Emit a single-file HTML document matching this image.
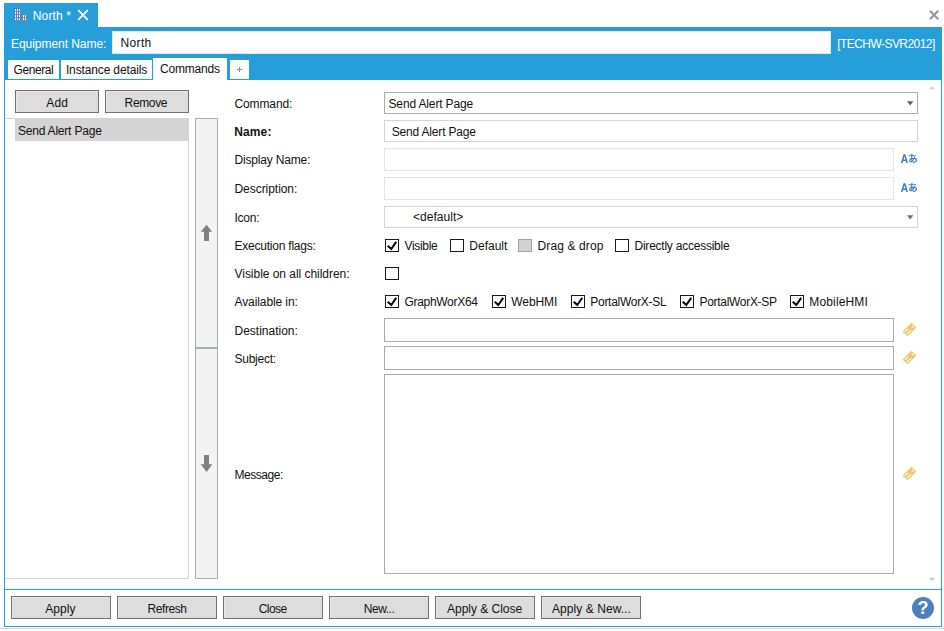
<!DOCTYPE html>
<html>
<head>
<meta charset="utf-8">
<title>North - Equipment</title>
<style>
html,body{margin:0;padding:0;}
body{width:944px;height:631px;background:#fff;position:relative;overflow:hidden;
 font-family:"Liberation Sans",sans-serif;font-size:12px;color:#111;}
.a{position:absolute;box-sizing:border-box;}
.t{position:absolute;white-space:nowrap;line-height:16px;height:16px;}
.blue{background:#259eda;}
.btn{background:#dddddd;border:1px solid #707070;box-shadow:inset 1px 1px 0 #e9e9e9;}
.tab{background:#fff;}
.cb{width:14px;height:13px;border:1px solid #1a1a1a;background:#fff;}
.cb.dis{border-color:#a3a3a3;background:#d2d2d2;}
.tb{background:#fff;border:1px solid #aba8a8;}
svg{position:absolute;overflow:visible;}
</style>
</head>
<body>
<!-- document tab -->
<div class="a blue" style="left:4px;top:3px;width:94px;height:24px;"></div>
<!-- blue header band -->
<div class="a blue" style="left:4px;top:27px;width:938px;height:53px;"></div>
<!-- window frame -->
<div class="a" style="left:4px;top:80px;width:938px;height:547px;border:1px solid #259eda;border-top:none;"></div>
<!-- separator above button bar -->
<div class="a blue" style="left:5px;top:589px;width:936px;height:1px;"></div>
<!-- bottom gray line -->
<div class="a" style="left:0;top:628px;width:944px;height:1px;background:#d9d6d6;"></div>

<!-- building icon -->
<svg style="left:14px;top:8px;" width="14" height="14" viewBox="0 0 14 14">
 <rect x="0.2" y="0.2" width="6.6" height="13.4" fill="#5b7fbd"/>
 <g fill="#fff">
  <rect x="1" y="1.2" width="1" height="2"/><rect x="3" y="1.2" width="1" height="2"/><rect x="5" y="1.2" width="1" height="2"/>
  <rect x="1" y="4.2" width="1" height="2"/><rect x="3" y="4.2" width="1" height="2"/><rect x="5" y="4.2" width="1" height="2"/>
  <rect x="1" y="7.2" width="1" height="2"/><rect x="3" y="7.2" width="1" height="2"/><rect x="5" y="7.2" width="1" height="2"/>
  <rect x="1" y="10.2" width="1" height="2"/><rect x="3" y="10.2" width="1" height="2"/><rect x="5" y="10.2" width="1" height="2"/>
 </g>
 <rect x="8.2" y="6.2" width="4.6" height="7.4" fill="#848484"/>
 <g fill="#fff">
  <rect x="9" y="7.2" width="1" height="2"/><rect x="11" y="7.2" width="1" height="2"/>
  <rect x="9" y="10.2" width="1" height="2"/><rect x="11" y="10.2" width="1" height="2"/>
 </g>
</svg>
<!-- tab close X -->
<svg style="left:77px;top:9px;" width="12" height="12" viewBox="0 0 12 12">
 <path d="M1.2 1.2 L10.8 10.8 M10.8 1.2 L1.2 10.8" stroke="#fff" stroke-width="1.7" fill="none"/>
</svg>
<!-- window close X -->
<svg style="left:928px;top:10px;" width="11" height="11" viewBox="0 0 11 11">
 <path d="M1.9 0.8 L10.3 9.2 M10.3 0.8 L1.9 9.2" stroke="#979797" stroke-width="2.1" fill="none"/>
</svg>

<!-- equipment name input -->
<div class="a" style="left:112px;top:31px;width:719px;height:23px;background:#fff;border:1px solid #e6e6e6;"></div>

<!-- sub tabs -->
<div class="a tab" style="left:8px;top:60px;width:51px;height:19px;"></div>
<div class="a tab" style="left:61px;top:60px;width:91px;height:19px;"></div>
<div class="a tab" style="left:153px;top:58px;width:74px;height:22px;"></div>
<div class="a tab" style="left:230px;top:60px;width:19px;height:19px;"></div>
<svg style="left:236px;top:66px;" width="7" height="7" viewBox="0 0 7 7">
 <path d="M3.5 0.9 V6.1 M0.9 3.5 H6.1" stroke="#7a9a8c" stroke-width="1" fill="none"/>
</svg>

<!-- left pane -->
<div class="a btn" style="left:15px;top:90px;width:84px;height:23px;"></div>
<div class="a btn" style="left:105px;top:90px;width:84px;height:23px;"></div>
<div class="a" style="left:5px;top:118px;width:184px;height:461px;border:1px solid #d6d4d4;border-left:none;"></div>
<div class="a" style="left:15px;top:118px;width:174px;height:23px;background:#d5d3d4;"></div>
<!-- up / down column -->
<div class="a" style="left:195px;top:118px;width:23px;height:230px;background:#f3f3f3;border:1px solid #a7afb5;"></div>
<div class="a" style="left:195px;top:348px;width:23px;height:231px;background:#f3f3f3;border:1px solid #a7afb5;"></div>
<svg style="left:200px;top:224px;" width="14" height="18" viewBox="0 0 14 18">
 <path d="M6.5 0.7 L12.2 7.8 H9 V17 H4 V7.8 H0.8 Z" fill="#808080"/>
</svg>
<svg style="left:200px;top:455px;" width="14" height="18" viewBox="0 0 14 18">
 <path d="M4 0 H9 V9.3 H12.4 L6.6 16.9 L0.7 9.3 H4 Z" fill="#808080"/>
</svg>

<!-- form fields -->
<div class="a" style="left:384px;top:92px;width:534px;height:22px;background:#fff;border:1px solid #acacac;"></div>
<svg style="left:907px;top:101px;" width="7" height="5" viewBox="0 0 7 5"><path d="M0 0.3 H6.4 L3.2 4.4 Z" fill="#606060"/></svg>
<div class="a" style="left:384px;top:120px;width:534px;height:22px;background:#fff;border:1px solid #d4d4d4;"></div>
<div class="a" style="left:384px;top:148px;width:510px;height:23px;background:#fff;border:1px solid #e3e3ec;"></div>
<div class="a" style="left:384px;top:177px;width:510px;height:23px;background:#fff;border:1px solid #e3e3ec;"></div>
<div class="a" style="left:384px;top:206px;width:534px;height:22px;background:#fff;border:1px solid #d4d4d4;"></div>
<svg style="left:907px;top:215px;" width="7" height="5" viewBox="0 0 7 5"><path d="M0 0.3 H6.4 L3.2 4.4 Z" fill="#707070"/></svg>

<!-- A-a language icons -->
<svg style="left:900px;top:153px;" width="18" height="11" viewBox="0 0 18 11">
 <path fill="#4380bf" fill-rule="evenodd" d="M0.9 9.9 L3.5 1.2 H5.4 L8 9.9 H6.3 L5.75 7.9 H3.15 L2.6 9.9 Z M3.55 6.6 H5.35 L4.45 3.2 Z"/>
 <g stroke="#4380bf" stroke-width="1.15" fill="none" stroke-linecap="round">
  <path d="M9.2 2.7 H15.8"/>
  <path d="M11.9 1.1 C11.6 3.8 11.5 6.2 12 8.8"/>
  <path d="M14.4 4.3 C13.6 6.9 11.9 8.9 10.3 8.7 C9.1 8.3 9.5 6.3 11.5 5.6 C13.9 4.8 16.5 5.3 16.6 7.1 C16.6 8.5 15.1 9.2 13.5 9.4"/>
 </g>
</svg>
<svg style="left:900px;top:182px;" width="18" height="11" viewBox="0 0 18 11">
 <path fill="#4380bf" fill-rule="evenodd" d="M0.9 9.9 L3.5 1.2 H5.4 L8 9.9 H6.3 L5.75 7.9 H3.15 L2.6 9.9 Z M3.55 6.6 H5.35 L4.45 3.2 Z"/>
 <g stroke="#4380bf" stroke-width="1.15" fill="none" stroke-linecap="round">
  <path d="M9.2 2.7 H15.8"/>
  <path d="M11.9 1.1 C11.6 3.8 11.5 6.2 12 8.8"/>
  <path d="M14.4 4.3 C13.6 6.9 11.9 8.9 10.3 8.7 C9.1 8.3 9.5 6.3 11.5 5.6 C13.9 4.8 16.5 5.3 16.6 7.1 C16.6 8.5 15.1 9.2 13.5 9.4"/>
 </g>
</svg>

<!-- checkboxes row 1 -->
<div class="a cb" style="left:385px;top:239px;"></div>
<div class="a cb" style="left:450px;top:239px;"></div>
<div class="a cb dis" style="left:518px;top:239px;"></div>
<div class="a cb" style="left:615px;top:239px;"></div>
<!-- row 2 -->
<div class="a cb" style="left:385px;top:267px;"></div>
<!-- row 3 -->
<div class="a cb" style="left:385px;top:295px;"></div>
<div class="a cb" style="left:492px;top:295px;"></div>
<div class="a cb" style="left:571px;top:295px;"></div>
<div class="a cb" style="left:680px;top:295px;"></div>
<div class="a cb" style="left:790px;top:295px;"></div>
<!-- check marks -->
<svg style="left:385px;top:239px;" width="14" height="13" viewBox="0 0 14 13"><path d="M2.7 6.7 L6.3 10 L11.2 2.9" stroke="#000" stroke-width="2" fill="none"/></svg>
<svg style="left:385px;top:295px;" width="14" height="13" viewBox="0 0 14 13"><path d="M2.7 6.7 L6.3 10 L11.2 2.9" stroke="#000" stroke-width="2" fill="none"/></svg>
<svg style="left:492px;top:295px;" width="14" height="13" viewBox="0 0 14 13"><path d="M2.7 6.7 L6.3 10 L11.2 2.9" stroke="#000" stroke-width="2" fill="none"/></svg>
<svg style="left:571px;top:295px;" width="14" height="13" viewBox="0 0 14 13"><path d="M2.7 6.7 L6.3 10 L11.2 2.9" stroke="#000" stroke-width="2" fill="none"/></svg>
<svg style="left:680px;top:295px;" width="14" height="13" viewBox="0 0 14 13"><path d="M2.7 6.7 L6.3 10 L11.2 2.9" stroke="#000" stroke-width="2" fill="none"/></svg>
<svg style="left:790px;top:295px;" width="14" height="13" viewBox="0 0 14 13"><path d="M2.7 6.7 L6.3 10 L11.2 2.9" stroke="#000" stroke-width="2" fill="none"/></svg>

<!-- destination / subject / message -->
<div class="a tb" style="left:384px;top:318px;width:510px;height:24px;"></div>
<div class="a tb" style="left:384px;top:346px;width:510px;height:24px;"></div>
<div class="a tb" style="left:384px;top:374px;width:510px;height:200px;"></div>

<!-- tag icons -->
<svg style="left:902px;top:322px;" width="15" height="15" viewBox="0 0 15 15">
 <g transform="rotate(-45 7.5 7.5)">
  <rect x="1.3" y="4" width="12.4" height="7" rx="0.7" fill="#efc568"/>
  <path d="M11.9 6.1 L12.4 7.1 L13.4 7.6 L12.4 8.1 L11.9 9.1 L11.4 8.1 L10.4 7.6 L11.4 7.1 Z" fill="#fff"/>
  <rect x="2.6" y="5.4" width="4.4" height="1.15" fill="#fff"/>
  <rect x="2.5" y="8.4" width="5.8" height="1.15" fill="#fff"/>
 </g>
</svg>
<svg style="left:902px;top:350px;" width="15" height="15" viewBox="0 0 15 15">
 <g transform="rotate(-45 7.5 7.5)">
  <rect x="1.3" y="4" width="12.4" height="7" rx="0.7" fill="#efc568"/>
  <path d="M11.9 6.1 L12.4 7.1 L13.4 7.6 L12.4 8.1 L11.9 9.1 L11.4 8.1 L10.4 7.6 L11.4 7.1 Z" fill="#fff"/>
  <rect x="2.6" y="5.4" width="4.4" height="1.15" fill="#fff"/>
  <rect x="2.5" y="8.4" width="5.8" height="1.15" fill="#fff"/>
 </g>
</svg>
<svg style="left:902px;top:466px;" width="15" height="15" viewBox="0 0 15 15">
 <g transform="rotate(-45 7.5 7.5)">
  <rect x="1.3" y="4" width="12.4" height="7" rx="0.7" fill="#efc568"/>
  <path d="M11.9 6.1 L12.4 7.1 L13.4 7.6 L12.4 8.1 L11.9 9.1 L11.4 8.1 L10.4 7.6 L11.4 7.1 Z" fill="#fff"/>
  <rect x="2.6" y="5.4" width="4.4" height="1.15" fill="#fff"/>
  <rect x="2.5" y="8.4" width="5.8" height="1.15" fill="#fff"/>
 </g>
</svg>

<!-- scroll arrows -->
<svg style="left:929px;top:86px;" width="7" height="4" viewBox="0 0 7 4"><path d="M0 3.2 L3 0 L6 3.2 Z" fill="#d4d4d4"/></svg>
<svg style="left:929px;top:577px;" width="7" height="5" viewBox="0 0 7 5"><path d="M0 0.7 H6 L3 4 Z" fill="#c8c8c8"/></svg>

<!-- bottom buttons -->
<div class="a btn" style="left:11px;top:596px;width:100px;height:23px;"></div>
<div class="a btn" style="left:117px;top:596px;width:100px;height:23px;"></div>
<div class="a btn" style="left:223px;top:596px;width:100px;height:23px;"></div>
<div class="a btn" style="left:329px;top:596px;width:100px;height:23px;"></div>
<div class="a btn" style="left:435px;top:596px;width:100px;height:23px;"></div>
<div class="a btn" style="left:541px;top:596px;width:100px;height:23px;"></div>

<!-- help icon -->
<div class="a" style="left:912px;top:597px;width:22px;height:22px;border-radius:11px;background:#4b81bc;"></div>
<span class="t" style="left:917.4px;top:598.3px;font-size:18px;font-weight:700;color:#fff;line-height:21px;height:21px;">?</span>

<span class="t" style="left:32.80px;top:7.70px;letter-spacing:0.137px;color:#fff;">North *</span>
<span class="t" style="left:11.00px;top:35.75px;letter-spacing:-0.051px;color:#fff;">Equipment Name:</span>
<span class="t" style="left:120.60px;top:34.60px;letter-spacing:0.333px;">North</span>
<span class="t" style="left:837.20px;top:36.00px;letter-spacing:-0.548px;color:#fff;">[TECHW-SVR2012]</span>
<span class="t" style="left:13.50px;top:61.50px;letter-spacing:-0.421px;">General</span>
<span class="t" style="left:65.90px;top:61.50px;letter-spacing:-0.136px;">Instance details</span>
<span class="t" style="left:160.00px;top:60.50px;letter-spacing:-0.193px;">Commands</span>
<span class="t" style="left:46.30px;top:94.75px;letter-spacing:0.111px;">Add</span>
<span class="t" style="left:124.60px;top:94.75px;letter-spacing:-0.362px;">Remove</span>
<span class="t" style="left:17.90px;top:122.60px;letter-spacing:-0.201px;">Send Alert Page</span>
<span class="t" style="left:234.50px;top:96.00px;letter-spacing:-0.122px;">Command:</span>
<span class="t" style="left:234.30px;top:123.75px;letter-spacing:0.104px;font-weight:700;">Name:</span>
<span class="t" style="left:234.50px;top:151.75px;letter-spacing:-0.182px;">Display Name:</span>
<span class="t" style="left:234.50px;top:180.50px;letter-spacing:-0.048px;">Description:</span>
<span class="t" style="left:234.40px;top:210.00px;letter-spacing:-0.220px;">Icon:</span>
<span class="t" style="left:234.50px;top:238.00px;letter-spacing:-0.225px;">Execution flags:</span>
<span class="t" style="left:234.50px;top:266.00px;letter-spacing:-0.033px;">Visible on all children:</span>
<span class="t" style="left:234.50px;top:294.00px;letter-spacing:-0.096px;">Available in:</span>
<span class="t" style="left:234.50px;top:322.50px;letter-spacing:-0.003px;">Destination:</span>
<span class="t" style="left:234.50px;top:350.50px;letter-spacing:-0.254px;">Subject:</span>
<span class="t" style="left:234.40px;top:466.50px;letter-spacing:-0.427px;">Message:</span>
<span class="t" style="left:388.50px;top:95.80px;letter-spacing:-0.144px;">Send Alert Page</span>
<span class="t" style="left:391.70px;top:123.70px;letter-spacing:-0.173px;">Send Alert Page</span>
<span class="t" style="left:413.00px;top:209.00px;letter-spacing:0.033px;">&lt;default&gt;</span>
<span class="t" style="left:404.50px;top:238.00px;letter-spacing:-0.326px;">Visible</span>
<span class="t" style="left:469.30px;top:238.00px;letter-spacing:0.002px;">Default</span>
<span class="t" style="left:537.50px;top:238.00px;letter-spacing:0.122px;">Drag &amp; drop</span>
<span class="t" style="left:634.50px;top:238.00px;letter-spacing:-0.233px;">Directly accessible</span>
<span class="t" style="left:404.50px;top:294.00px;letter-spacing:-0.306px;">GraphWorX64</span>
<span class="t" style="left:511.25px;top:294.00px;letter-spacing:-0.074px;">WebHMI</span>
<span class="t" style="left:590.30px;top:294.00px;letter-spacing:-0.286px;">PortalWorX-SL</span>
<span class="t" style="left:699.50px;top:294.00px;letter-spacing:-0.303px;">PortalWorX-SP</span>
<span class="t" style="left:809.25px;top:294.00px;letter-spacing:0.155px;">MobileHMI</span>
<span class="t" style="left:45.25px;top:601.00px;letter-spacing:0.083px;">Apply</span>
<span class="t" style="left:147.50px;top:601.00px;letter-spacing:-0.432px;">Refresh</span>
<span class="t" style="left:258.75px;top:601.00px;letter-spacing:-0.564px;">Close</span>
<span class="t" style="left:363.75px;top:601.00px;letter-spacing:-0.452px;">New...</span>
<span class="t" style="left:447.00px;top:601.00px;letter-spacing:-0.016px;">Apply &amp; Close</span>
<span class="t" style="left:552.00px;top:601.00px;letter-spacing:0.061px;">Apply &amp; New...</span>
</body>
</html>
